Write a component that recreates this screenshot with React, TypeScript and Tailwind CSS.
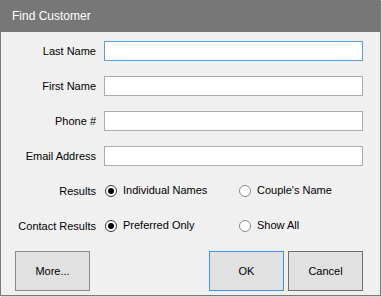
import React from 'react'

const fields = ['Last Name', 'First Name', 'Phone #', 'Email Address']

function Radio({ checked, label }: { checked?: boolean; label: string }) {
  return (
    <label className="flex items-center gap-[6px]">
      <span
        className={`flex h-[12px] w-[12px] items-center justify-center rounded-full border bg-white ${
          checked ? 'border-[#333333]' : 'border-[#8a8a8a]'
        }`}
      >
        {checked && <span className="h-[6px] w-[6px] rounded-full bg-black" />}
      </span>
      <span className="-mt-[2px]">{label}</span>
    </label>
  )
}

export default function App() {
  return (
    <div className="h-[297px] w-[382px] bg-white" style={{ fontFamily: '"Liberation Sans", Arial, sans-serif' }}>
      <div className="flex h-[296px] w-[381px] flex-col border-b border-l border-r border-[#7a7a7a] bg-[#f0f0f0] shadow-[1px_1px_0_#d8d8d8]">
        {/* Title bar */}
        <div className="flex h-[32px] shrink-0 items-center bg-[#777777] pl-[11px] text-[12px] text-white">
          Find Customer
        </div>

        <div className="flex flex-col gap-[15px] pt-[9px] text-[11px] text-black">
          {fields.map((f, i) => (
            <div key={f} className="flex h-[20px] items-center">
              <div className="w-[95px] text-right">{f}</div>
              <input
                className={`ml-[8px] h-[20px] w-[259px] border bg-white outline-none ${
                  i === 0 ? 'border-[#5b9be0]' : 'border-[#acacac]'
                }`}
              />
            </div>
          ))}

          <div className="flex h-[20px] items-center">
            <div className="w-[95px] text-right">Results</div>
            <div className="ml-[9px] w-[134px]">
              <Radio checked label="Individual Names" />
            </div>
            <Radio label="Couple's Name" />
          </div>

          <div className="flex h-[20px] items-center">
            <div className="w-[95px] text-right">Contact Results</div>
            <div className="ml-[9px] w-[134px]">
              <Radio checked label="Preferred Only" />
            </div>
            <Radio label="Show All" />
          </div>

          <div className="flex items-center pl-[14px] pr-[17px]">
            <button className="h-[40px] w-[75px] border border-[#8a8a8a] bg-[#e1e1e1]">More...</button>
            <div className="flex-1" />
            <button className="h-[40px] w-[75px] border border-[#3d95e8] bg-[#e1e1e1]">OK</button>
            <button className="ml-[4px] h-[40px] w-[75px] border border-[#707070] bg-[#e1e1e1]">Cancel</button>
          </div>
        </div>
      </div>
    </div>
  )
}
